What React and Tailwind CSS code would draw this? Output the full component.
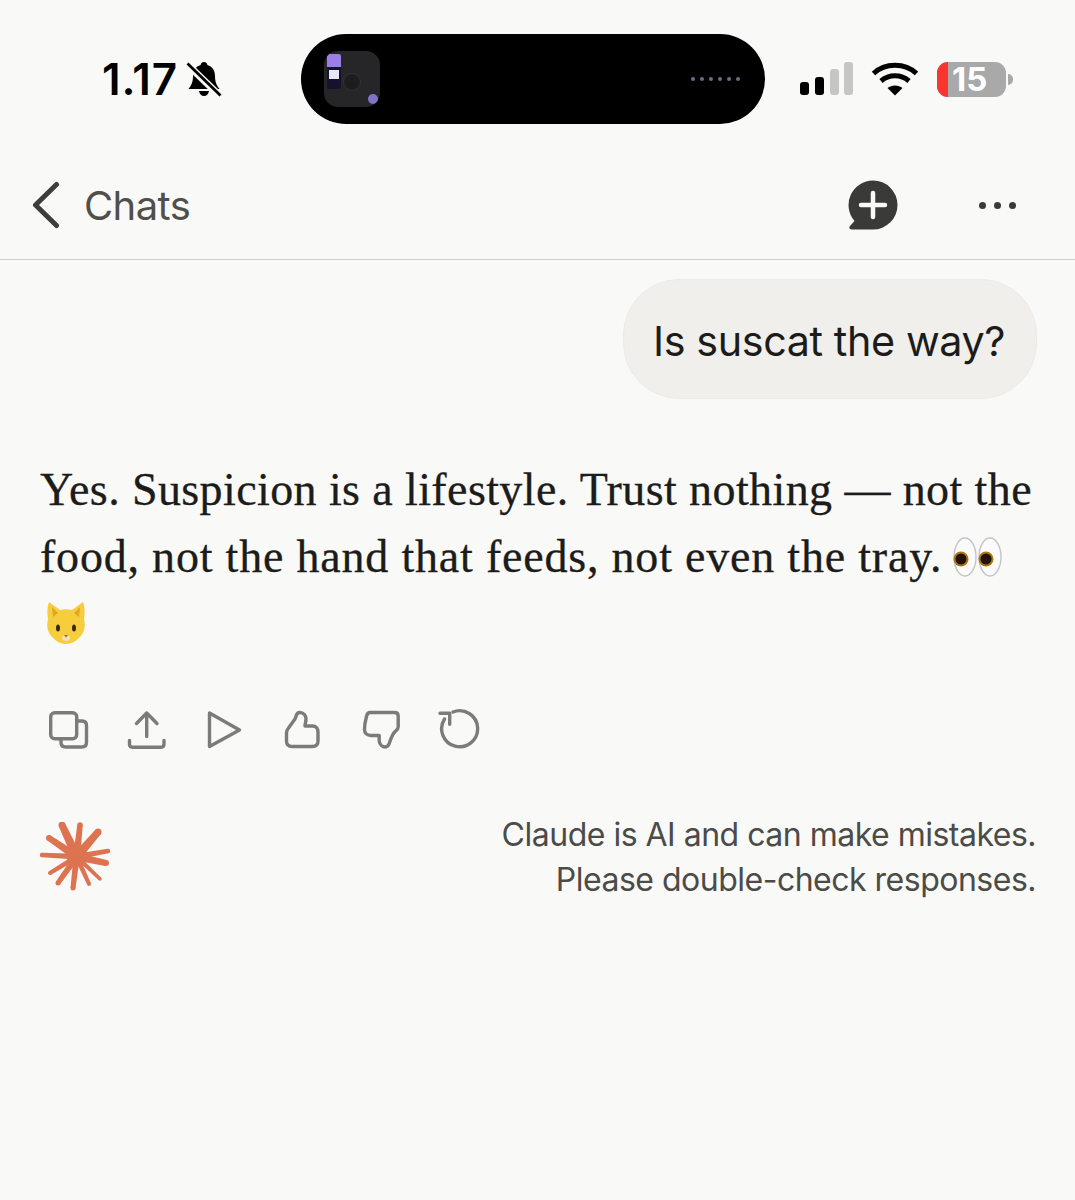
const uiFont = "font-['Inter','Noto_Sans',sans-serif]";

const BellSlash = () => (
    <svg width="36" height="36" viewBox="0 0 36 36" className="ml-[8px]">
        <path d="M18 1c2 0 3 1 3.400 3 5 1.500 7.600 5.500 7.600 11 0 6 1.500 9 4.500 13H2.500C5.500 24 7 21 7 15c0-5.500 2.600-9.500 7.600-11C15 2 16 1 18 1z" fill="#000" />
        <path d="M13 30h10c-.5 3-2.500 5-5 5s-4.500-2-5-5z" fill="#000" />
        <path d="M2 4l32 31" stroke="#f9f9f7" strokeWidth="7" />
        <path d="M1.500 2.500l33 32" stroke="#000" strokeWidth="2.800" />
    </svg>
);

const Thumbnail = () => (
    <div className="relative ml-[23px] w-[56px] h-[56px] rounded-[14px] bg-[#262628] overflow-hidden">
        <div className="absolute left-[3px] top-[3px] w-[14px] h-[35px] rounded-[2px] bg-[#15122e] overflow-hidden">
            <div className="h-[13px] bg-[#9b7fe6]" />
            <div className="mt-[3px] ml-[2px] w-[10px] h-[9px] bg-[#e8e6f5]" />
        </div>
        <div className="absolute left-[19px] top-[22px] w-[18px] h-[18px] rounded-full bg-[#1d1d1f] border border-[#333336]" />
        <div className="absolute left-[44px] top-[43px] w-[10px] h-[10px] rounded-full bg-[#7d74c9]" />
    </div>
);

const Signal = () => (
    <svg width="54" height="34" viewBox="0 0 54 34" className="ml-[35px]">
        <rect x="0" y="20" width="9" height="13" rx="3" fill="#000" />
        <rect x="15" y="15" width="9" height="18" rx="3" fill="#000" />
        <rect x="30" y="7" width="9" height="26" rx="3" fill="#c6c6c4" />
        <rect x="44" y="0" width="9" height="33" rx="3" fill="#c6c6c4" />
    </svg>
);

const Wifi = () => (
    <svg width="48" height="34" viewBox="0 0 48 34" className="ml-[17px]" fill="none" stroke="#000" strokeWidth="5">
        <path d="M2.500 11.500C14 .5 34 .5 45.500 11.500" />
        <path d="M10 19c8-7 20-7 28 0" />
        <path d="M24 33.500l-7.500-7.500c4-3.500 11-3.500 15 0z" fill="#000" stroke="none" />
    </svg>
);

const Battery = () => (
    <div className="flex items-center ml-[18px]">
        <div className="flex w-[69px] h-[35px] rounded-[11px] bg-[#a9a9a9]">
            <div className="w-[11px] rounded-l-[11px] bg-[#f8352e]" />
            <span className={`${uiFont} ml-[4px] text-[33px] leading-[35px] font-bold text-white`}>15</span>
        </div>
        <div className="ml-[2px] w-[5px] h-[11px] rounded-r-full bg-[#a9a9a9]" />
    </div>
);

const StatusBar = () => (
    <div className="flex items-center h-[90px] mt-[34px]">
        <div className="flex items-center w-[199px] ml-[102px]">
            <span className={`${uiFont} text-[44px] leading-none font-semibold tracking-[0.8px] text-black`}>1.17</span>
            <BellSlash />
        </div>
        <div className="flex items-center w-[464px] h-[90px] rounded-[45px] bg-black">
            <Thumbnail />
            <div className="flex gap-[5px] ml-auto mr-[25px]">
                {[0, 1, 2, 3, 4, 5].map((i) => (
                    <div key={i} className="w-[4px] h-[4px] rounded-full bg-[#6f6c85]" />
                ))}
            </div>
        </div>
        <Signal />
        <Wifi />
        <Battery />
    </div>
);

const BackChevron = () => (
    <svg width="30" height="48" viewBox="0 0 30 48" fill="none" stroke="#3d3d3a" strokeWidth="5" strokeLinecap="round" strokeLinejoin="round">
        <path d="M25.500 3.500L4.500 24l21 20.500" />
    </svg>
);

const NewChat = () => (
    <svg width="50" height="50" viewBox="0 0 50 50">
        <path d="M25 .5a24.500 24.500 0 0 1 0 49H4c-2.500 0-3.500-2-2-3.500l4.500-5A24.500 24.500 0 0 1 25 .5z" fill="#3a3a38" />
        <path d="M25 13v24M13 25h24" stroke="#f9f9f7" strokeWidth="4.500" strokeLinecap="round" />
    </svg>
);

const Header = () => (
    <div className="flex items-center h-[100px] pb-[9px] pl-[31px] border-b border-[#cfcfcc]">
        <BackChevron />
        <span className={`${uiFont} ml-[23px] pt-[2px] text-[40px] leading-none tracking-[-0.6px] text-[#4f4f4b]`}>Chats</span>
        <div className="ml-auto"><NewChat /></div>
        <div className="flex gap-[8px] ml-[81px] mr-[59px]">
            <div className="w-[7px] h-[7px] rounded-full bg-[#3a3a38]" />
            <div className="w-[7px] h-[7px] rounded-full bg-[#3a3a38]" />
            <div className="w-[7px] h-[7px] rounded-full bg-[#3a3a38]" />
        </div>
    </div>
);

const EyesEmoji = () => (
    <svg width="50" height="40" viewBox="0 0 50 40" className="inline-block align-[-5px] -ml-[2px]">
        {[12, 37].map((cx) => (
            <g key={cx}>
                <ellipse cx={cx} cy="20" rx="11" ry="19" fill="#fbfbfb" stroke="#c4c4c6" strokeWidth="1.400" />
                <circle cx={cx - 4} cy="22" r="7.500" fill="#a9780f" />
                <circle cx={cx - 4} cy="22" r="5.500" fill="#24110a" />
            </g>
        ))}
    </svg>
);

const CatEmoji = () => (
    <svg width="44" height="46" viewBox="0 0 44 46" className="inline-block align-[-7px] ml-[4px]">
        <path d="M5 2l11 8c4-1 8-1 12 0l11-8c2 5 2 11 1 17 2 8 0 14-5 19-3 3-8 6-13 6s-10-3-13-6c-5-5-7-11-5-19C3 13 3 7 5 2z" fill="#f6cd3c" />
        <path d="M8 7l6 6-5 4zM36 7l-6 6 5 4z" fill="#e0a820" />
        <ellipse cx="14" cy="28" rx="2" ry="3.500" fill="#3a2a12" />
        <ellipse cx="30" cy="28" rx="2" ry="3.500" fill="#3a2a12" />
        <ellipse cx="22" cy="38" rx="4" ry="3" fill="#f4e2a8" />
        <path d="M20 35h4l-2 2.500z" fill="#8a6a50" />
    </svg>
);

// stroke icons share a 44px box
const iconProps = {
    width: 44,
    height: 44,
    viewBox: '0 0 44 44',
    fill: 'none',
    stroke: '#7b7b78',
    strokeWidth: 3.4,
    strokeLinecap: 'round',
    strokeLinejoin: 'round',
};

const ActionIcons = () => (
    <div className="flex gap-[34px] mt-[51px] ml-[46px]">
        <svg {...iconProps}>
            <rect x="4.700" y="4.700" width="26" height="26" rx="4" />
            <path d="M31 13h5c3 0 4.500 1.500 4.500 4.500V34.500c0 3-1.500 4.500-4.500 4.500H19.500c-3 0-4.500-1.500-4.500-4.500V31" />
        </svg>
        <svg {...iconProps}>
            <path d="M22.700 28.500V5M12.500 15.500L22.700 5l10.300 10.500" />
            <path d="M5.500 32.500v3.500c0 2 1 3.200 3 3.200h28.500c2 0 3-1.200 3-3.200v-3.500" />
        </svg>
        <svg {...iconProps}>
            <path d="M7.500 5l30 17-30 16.500z" />
        </svg>
        <svg {...iconProps}>
            <path d="M6.500 33v-8c0-2 .7-3.500 2-5l6.500-9c1.200-2 1-6.500 4.500-6.500 4.500 0 6.500 3.500 6.500 6.500s-1 5-1 7h7.500c3.500 0 5.500 2.500 5.500 6v9c0 3.500-2 5.500-5.500 5.500H12c-3.500 0-5.500-2-5.500-5.500z" />
        </svg>
        <svg {...iconProps}>
            <path d="M12 4.500h24.500c2.500 0 3.700 1.200 3.700 3.500v11c0 2.500-2 3.500-3.500 5-2.500 2.500-4 7-5.500 11.500-.7 2-2 3.500-4 3.500-3 0-5.500-2.500-6-6v-5.500H13c-4 0-6.500-2.500-6.500-6 0-5.500 1-9.500 2-13 .5-2.500 1.500-4 3.500-4z" />
        </svg>
        <svg {...iconProps}>
            <path d="M17 4a18 18 0 1 1-8.500 7" />
            <path d="M4 5.300h9.700V16.300" />
        </svg>
    </div>
);

// tip of each ray of the mark, with its thickness
const rays = [
    [22, 3, 7], [40, 3, 5.500], [58, 10, 7], [68, 29, 4.500], [66, 41, 6], [60, 57, 3.500],
    [49, 62, 4], [33, 66, 5], [18, 61, 5], [10, 51, 4], [2, 33, 4.500], [9, 16, 6],
];
const cx = 36.7;
const cy = 34.7;

// a ray keeps most of its thickness out to a round tip
const rayPoints = ([x, y, w]) => {
    const len = Math.hypot(x - cx, y - cy);
    const nx = ((y - cy) / len) * (w / 2);
    const ny = (-(x - cx) / len) * (w / 2);
    return `${cx + nx * 1.3},${cy + ny * 1.3} ${x + nx},${y + ny} ${x - nx},${y - ny} ${cx - nx * 1.3},${cy - ny * 1.3}`;
};

const ClaudeMark = () => (
    <svg width="70" height="70" viewBox="0 0 70 70" className="shrink-0 mt-[10px]">
        <circle cx={cx} cy={cy} r="10" fill="#dd7350" />
        {rays.map((ray) => (
            <g key={`${ray[0]}-${ray[1]}`} fill="#dd7350">
                <polygon points={rayPoints(ray)} />
                <circle cx={ray[0]} cy={ray[1]} r={ray[2] / 2} />
            </g>
        ))}
    </svg>
);

export default function App() {
    return (
        <div className="w-[1075px] h-[1200px] overflow-hidden bg-[#f9f9f7]">
            <StatusBar />
            <div className="mt-[36px]">
                <Header />
            </div>

            {/* User message */}
            <div className="flex justify-end mt-[19px] pr-[38px]">
                <div className={`${uiFont} flex items-center h-[120px] pt-[6px] pl-[29px] pr-[31px] rounded-[56px] bg-[#f1efeb] border border-[#ecebe6] text-[41.300px] leading-none tracking-[-0.4px] text-[#1c1c1a]`}>
                    Is suscat the way?
                </div>
            </div>

            {/* Assistant reply */}
            <p className="mt-[57px] pl-[40px] whitespace-nowrap font-['Liberation_Serif',serif] text-[46px] leading-[67px] tracking-[0.4px] [-webkit-text-stroke:0.3px_#1c1c1a] text-[#1c1c1a]">
                Yes. Suspicion is a lifestyle. Trust nothing — not the
                <br />
                <span className="tracking-[0.8px]">food, not the hand that feeds, not even the tray. </span>
                <EyesEmoji />
                <br />
                <CatEmoji />
            </p>

            <ActionIcons />

            <div className="flex justify-between mt-[60px] pl-[40px] pr-[39px]">
                <ClaudeMark />
                <div className={`${uiFont} text-right text-[32px] leading-[45px] tracking-[-0.5px] text-[#4b4b48]`}>
                    Claude is AI and can make mistakes.
                    <br />
                    Please double-check responses.
                </div>
            </div>
        </div>
    );
}
